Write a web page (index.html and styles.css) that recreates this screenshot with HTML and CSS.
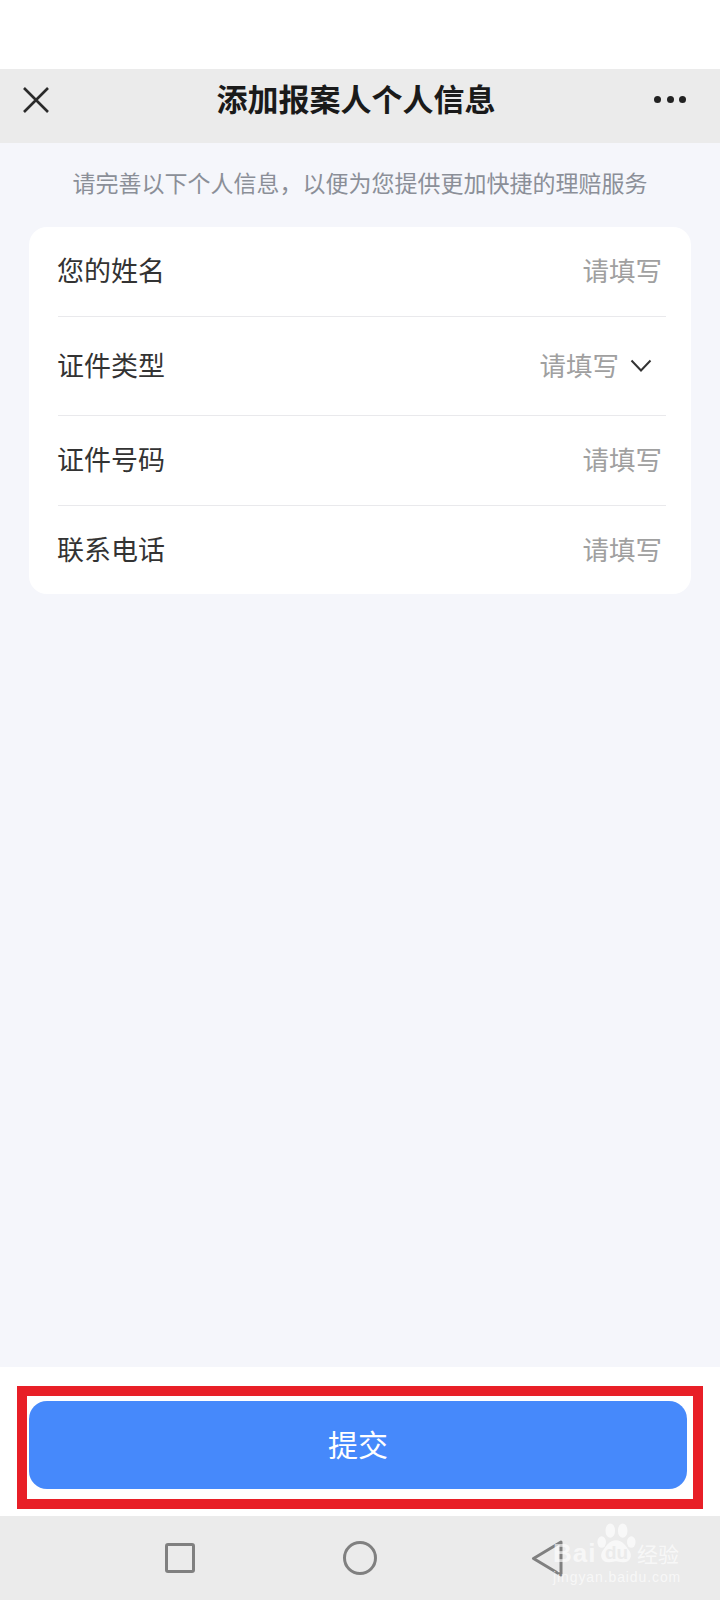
FILE: index.html
```html
<!DOCTYPE html>
<html lang="zh-CN">
<head>
  <meta charset="UTF-8" />
  <title>添加报案人个人信息</title>
  <link rel="stylesheet" href="styles.css">
</head>
<body>
  <div class="status"></div>

  <header class="topbar">
    <svg class="close" viewBox="0 0 26 26">
      <path d="M1 1l24 24M25 1L1 25" />
    </svg>
    <h1>添加报案人个人信息</h1>
    <div class="more"><i></i><i></i><i></i></div>
  </header>

  <main class="content">
    <p class="hint">请完善以下个人信息，以便为您提供更加快捷的理赔服务</p>

    <div class="card">
      <div class="row">
        <span class="label">您的姓名</span>
        <span class="value">请填写</span>
      </div>
      <div class="row row-select">
        <span class="label">证件类型</span>
        <span class="value">请填写</span>
        <svg class="chevron" viewBox="0 0 22 13">
          <path d="M1.5 1.5L11 11.5l9.5-10" />
        </svg>
      </div>
      <div class="row row-short">
        <span class="label">证件号码</span>
        <span class="value">请填写</span>
      </div>
      <div class="row row-short">
        <span class="label">联系电话</span>
        <span class="value">请填写</span>
      </div>
    </div>
  </main>

  <footer class="footer">
    <div class="mark">
      <button class="submit">提交</button>
    </div>
  </footer>

  <nav class="navbar">
    <span class="nav-square"></span>
    <span class="nav-circle"></span>
    <svg class="nav-back" viewBox="0 0 32 37">
      <path d="M30 2L2.5 18.5 30 35z" />
    </svg>

    <!-- watermark sits on top of the nav bar -->
    <div class="watermark">
      <svg class="paw" viewBox="0 0 44 44">
        <ellipse cx="7" cy="20" rx="4.5" ry="6" />
        <ellipse cx="16" cy="8" rx="5" ry="7.5" />
        <ellipse cx="29" cy="8" rx="5" ry="7.5" />
        <ellipse cx="38" cy="20" rx="4.5" ry="6" />
        <path d="M22 18c7 0 10 6 14 11 4 6 0 13-7 12-3 0-5-1-7-1s-4 1-7 1c-7 1-11-6-7-12 4-5 7-11 14-11z" />
      </svg>
      <div class="wm-top">
        <span class="wm-bai">Bai</span>
        <span class="wm-du">du</span>
        <span class="wm-cn">经验</span>
      </div>
      <div class="wm-url">jingyan.baidu.com</div>
    </div>
  </nav>
</body>
</html>
```

FILE: styles.css
```css
* {
  box-sizing: border-box;
}

body {
  margin: 0;
  height: 1600px;
  display: flex;
  flex-direction: column;
  background: #f5f6fb;
  font-family: "Liberation Sans", "Noto Sans CJK SC", sans-serif;
  color: #333;
}

.status {
  height: 69px;
  background: #fff;
}

.topbar {
  height: 74px;
  padding: 0 34px 12px 23px;
  display: flex;
  align-items: center;
  justify-content: space-between;
  background: #ebebeb;
}

.topbar h1 {
  margin: 0 0 -1px 9px;
  font-size: 31px;
  line-height: 40px;
  font-weight: 700;
  color: #1a1a1a;
}

.close {
  width: 26px;
  height: 26px;
  margin-top: -1px;
  fill: none;
  stroke: #2a2a2a;
  stroke-width: 2.6;
}

.more {
  width: 32px;
  display: flex;
  justify-content: space-between;
  margin-top: -1px;
}

.more i {
  width: 7px;
  height: 7px;
  border-radius: 50%;
  background: #222;
}

.content {
  flex: 1;
  padding: 0 29px;
}

.hint {
  margin: 25px 0 27px;
  font-size: 23px;
  line-height: 32px;
  text-align: center;
  color: #8b8f98;
}

.card {
  height: 367px;
  padding: 1px 25px 0 29px;
  background: #fff;
  border-radius: 18px;
}

.row {
  height: 89px;
  display: flex;
  align-items: center;
  justify-content: space-between;
  border-bottom: 1px solid #e9e9ec;
  padding-right: 4px;
}

.row-select {
  height: 99px;
  justify-content: flex-start;
  padding: 2px 14px 0 0;
}

.row-select .label {
  margin-right: auto;
}

.row-short {
  height: 90px;
}

.row:last-child {
  border-bottom: none;
}

.label {
  margin-left: -1px;
  font-size: 27px;
  line-height: 36px;
  color: #333;
}

.value {
  font-size: 26.5px;
  line-height: 36px;
  color: #a0a0a0;
}

.chevron {
  width: 22px;
  height: 13px;
  margin: -3px 0 0 11px;
  fill: none;
  stroke: #333;
  stroke-width: 2;
}

.footer {
  height: 149px;
  padding: 19px 17px 0;
  background: #fff;
}

.mark {
  height: 123px;
  padding: 5px 6px 9px 2px;
  border: 10px solid #e81f27;
}

.submit {
  display: block;
  width: 100%;
  height: 88px;
  padding: 0 0 4px;
  border: none;
  border-radius: 18px;
  background: #4689fb;
  font-family: inherit;
  font-size: 30px;
  color: #fff;
}

.navbar {
  position: relative;
  height: 84px;
  background: #ebebeb;
}

.nav-square,
.nav-circle,
.nav-back {
  position: absolute;
}

.nav-square {
  left: 165px;
  top: 27px;
  width: 30px;
  height: 30px;
  border: 3px solid #808080;
  border-radius: 3px;
}

.nav-circle {
  left: 343px;
  top: 25px;
  width: 34px;
  height: 34px;
  border: 3px solid #808080;
  border-radius: 50%;
}

.nav-back {
  left: 531px;
  top: 24px;
  width: 32px;
  height: 37px;
  fill: none;
  stroke: #808080;
  stroke-width: 3;
  stroke-linejoin: round;
}

.watermark {
  position: absolute;
  left: 553px;
  top: 7px;
  width: 127px;
  height: 58px;
  color: rgba(255, 255, 255, 0.65);
}

.paw {
  position: absolute;
  left: 41px;
  top: 0;
  width: 44px;
  height: 42px;
  fill: rgba(255, 255, 255, 0.65);
}

.wm-top {
  position: absolute;
  left: 0;
  right: 0;
  top: 18px;
  display: flex;
  align-items: center;
  height: 24px;
}

.wm-bai {
  width: 52px;
  font-size: 26px;
  font-weight: 700;
  letter-spacing: 1px;
}

.wm-du {
  width: 32px;
  font-size: 19px;
  font-weight: 700;
  color: #ebebeb;
}

.wm-cn {
  font-size: 21px;
}

.wm-url {
  position: absolute;
  left: 0;
  right: 0;
  top: 46px;
  font-size: 14px;
  line-height: 16px;
  letter-spacing: 0.9px;
  white-space: nowrap;
}
```
